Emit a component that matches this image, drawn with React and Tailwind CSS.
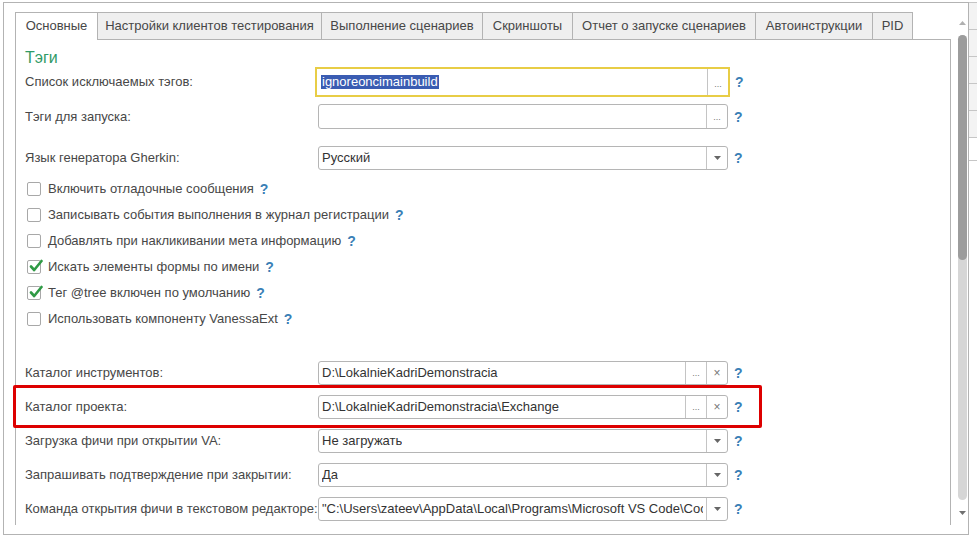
import { useState } from 'react';

const tabs = [
  { name: 'Основные', w: 'w-[82px]' },
  { name: 'Настройки клиентов тестирования', w: 'w-[224px]' },
  { name: 'Выполнение сценариев', w: 'w-[161px]' },
  { name: 'Скриншоты', w: 'w-[90px]' },
  { name: 'Отчет о запуске сценариев', w: 'w-[183px]' },
  { name: 'Автоинструкции', w: 'w-[117px]' },
  { name: 'PID', w: 'w-[41px]' },
];

const checks = [
  { label: 'Включить отладочные сообщения', on: false },
  { label: 'Записывать события выполнения в журнал регистрации', on: false },
  { label: 'Добавлять при накликивании мета информацию', on: false },
  { label: 'Искать элементы формы по имени', on: true },
  { label: 'Тег @tree включен по умолчанию', on: true },
  { label: 'Использовать компоненту VanessaExt', on: false },
];

const Help = ({ className = '' }) => (
  <span className={`text-[#3a7fb6] font-bold text-[14px] leading-none ${className}`}>?</span>
);

const BtnDots = () => (
  <div className="w-[21px] h-full border-l border-[#c4c4c4] flex items-end justify-center pb-[6px] text-[9px] text-[#777] leading-none">
    ...
  </div>
);

const BtnClear = () => (
  <div className="w-[21px] h-full border-l border-[#c4c4c4] flex items-center justify-center text-[12px] text-[#777] leading-none">
    ×
  </div>
);

const BtnDrop = () => (
  <div className="w-[21px] h-full border-l border-[#c4c4c4] flex items-center justify-center">
    <svg width="7" height="4" viewBox="0 0 7 4">
      <path d="M0 0h7L3.5 4z" fill="#666" />
    </svg>
  </div>
);

const Field = ({ value = '', buttons = [] }) => (
  <div className="w-[410px] h-[24px] border border-[#b5b5b5] rounded-[3px] bg-white flex overflow-hidden">
    <div className="flex-1 min-w-0 px-[3px] flex items-center overflow-hidden whitespace-nowrap text-[#333]">
      <span className="block overflow-hidden">{value}</span>
    </div>
    {buttons.map((b, i) =>
      b === 'dots' ? <BtnDots key={i} /> : b === 'clear' ? <BtnClear key={i} /> : <BtnDrop key={i} />
    )}
  </div>
);

const Row = ({ label, className = '', children }) => (
  <div className={`flex items-center h-[24px] ${className}`}>
    <div className="w-[293px] shrink-0 whitespace-nowrap">{label}</div>
    {children}
    <Help className="ml-[6px]" />
  </div>
);

const CheckBox = ({ on }) => (
  <div className="relative w-[14px] h-[14px] border border-[#a8a8a8] rounded-[2px] bg-white shrink-0">
    {on && (
      <svg className="absolute left-[1px] -top-[2px]" width="14" height="14" viewBox="0 0 14 14">
        <path d="M2 7.5l3.2 3.5L12.5 2" fill="none" stroke="#2f9a45" strokeWidth="2.6" strokeLinecap="round" strokeLinejoin="round" />
      </svg>
    )}
  </div>
);

export default function App() {
  const [active] = useState(0);

  return (
    <div className="relative w-[977px] h-[541px] overflow-hidden bg-white flex pt-[2px] pl-[3px] font-['Liberation_Sans',Arial,sans-serif] text-[13px] text-[#474747]">
      {/* main frame */}
      <div className="w-[966px] h-[533px] border border-[#b3b3b3] flex pl-[11px] pt-[9px]">
        <div className="w-[936px] flex flex-col">
          {/* tabs */}
          <div className="flex h-[27px] items-start">
            {tabs.map((t, i) => (
              <div
                key={t.name}
                className={`${t.w} border-t border-l border-[#b3b3b3] flex items-center justify-center whitespace-nowrap ${
                  i === tabs.length - 1 ? 'border-r' : ''
                } ${i === active ? 'relative z-10 h-[28px] pb-[1px] bg-white' : 'h-[27px] bg-[#efefef]'}`}
              >
                {t.name}
              </div>
            ))}
          </div>

          {/* panel */}
          <div className="h-[486px] border-t border-x border-[#b3b3b3] pl-[9px] overflow-hidden">
            <div className="mt-[9px] h-[18px] leading-[18px] text-[16px] text-[#2f9a66]">Тэги</div>

            <div className="flex items-center h-[30px]">
              <div className="w-[290px] shrink-0">Список исключаемых тэгов:</div>
              <div className="w-[415px] h-[30px] border-2 border-[#e8cd46] bg-white flex">
                <div className="flex-1 pl-[4px] flex items-center">
                  <span className="bg-[#3a5cb2] text-white leading-[14px] px-[1px]">ignoreoncimainbuild</span>
                </div>
                <BtnDots />
              </div>
              <Help className="ml-[5px]" />
            </div>

            <Row label="Тэги для запуска:" className="mt-[7px] !h-[25px]">
              <div className="w-[410px] h-[25px] border border-[#b5b5b5] rounded-[3px] bg-white flex">
                <div className="flex-1" />
                <BtnDots />
              </div>
            </Row>

            <Row label="Язык генератора Gherkin:" className="mt-[17px]">
              <Field value="Русский" buttons={['drop']} />
            </Row>

            <div className="mt-[6px]">
              {checks.map((c) => (
                <div key={c.label} className="h-[26px] flex items-center pl-[2px]">
                  <CheckBox on={c.on} />
                  <span className="ml-[7px] whitespace-nowrap">{c.label}</span>
                  <Help className="ml-[6px]" />
                </div>
              ))}
            </div>

            <Row label="Каталог инструментов:" className="mt-[29px]">
              <Field value="D:\LokalnieKadriDemonstracia" buttons={['dots', 'clear']} />
            </Row>
            <Row label="Каталог проекта:" className="mt-[10px]">
              <Field value="D:\LokalnieKadriDemonstracia\Exchange" buttons={['dots', 'clear']} />
            </Row>
            <Row label="Загрузка фичи при открытии VA:" className="mt-[10px]">
              <Field value="Не загружать" buttons={['drop']} />
            </Row>
            <Row label="Запрашивать подтверждение при закрытии:" className="mt-[10px]">
              <Field value="Да" buttons={['drop']} />
            </Row>
            <Row label="Команда открытия фичи в текстовом редакторе:" className="mt-[10px]">
              <Field value={'"C:\\Users\\zateev\\AppData\\Local\\Programs\\Microsoft VS Code\\Coc'} buttons={['drop']} />
            </Row>
          </div>
        </div>

        {/* scrollbar */}
        <div className="ml-[7px] w-[9px] flex flex-col items-center">
          <svg className="mt-[9px]" width="7" height="4" viewBox="0 0 7 4">
            <path d="M3.5 0L7 4H0z" fill="#b0b0b0" />
          </svg>
          <div className="mt-[10px] w-[9px] h-[465px] rounded-full bg-[#d6d6d6] flex flex-col">
            <div className="h-[225px] rounded-full bg-[#9c9c9c]" />
          </div>
          <svg className="mt-[11px]" width="7" height="4" viewBox="0 0 7 4">
            <path d="M0 0h7L3.5 4z" fill="#707070" />
          </svg>
        </div>
      </div>

      {/* side strip */}
      <div className="w-[8px] flex flex-col">
        <div className="border-t border-[#c6c6c6] bg-[#f3f3f3]">
          {[0, 1, 2, 3, 4].map((i) => (
            <div key={i} className="h-[27px] border-b border-[#c6c6c6]" />
          ))}
        </div>
        <div className="mt-[22px] border-t border-[#c6c6c6] flex-1" />
      </div>

      {/* highlight box */}
      <div className="absolute left-[13px] top-[385px] w-[749px] h-[43px] border-[3px] border-[#dd0000] rounded-[2px]" />
    </div>
  );
}
